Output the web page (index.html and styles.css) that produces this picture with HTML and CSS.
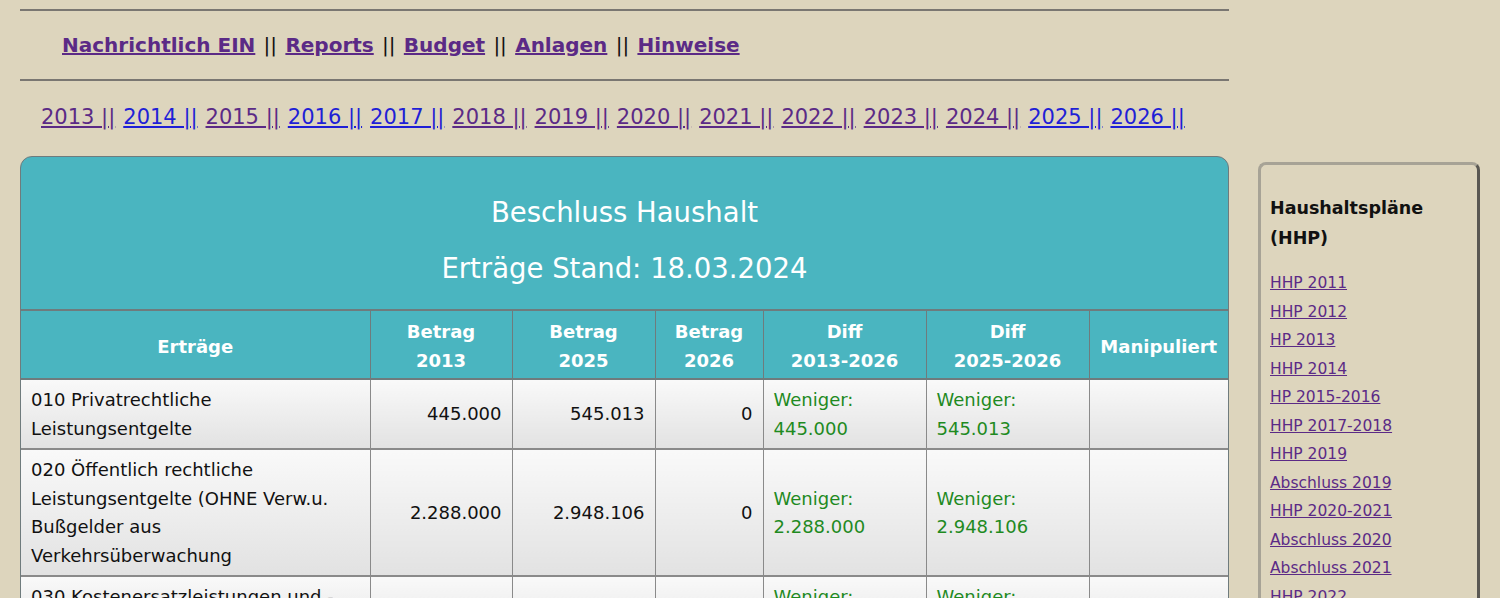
FILE: index.html
```html
<!DOCTYPE html>
<html lang="de">
<head>
<meta charset="utf-8">
<title>Beschluss Haushalt</title>
<link rel="stylesheet" href="styles.css">
</head>
<body>
<div class="page">
  <div class="main">
    <hr class="rule rule-top">
    <p class="nav">
      <a href="#" class="v">Nachrichtlich EIN</a><span class="sep">||</span><a href="#" class="v">Reports</a><span class="sep">||</span><a href="#" class="v">Budget</a><span class="sep">||</span><a href="#" class="v">Anlagen</a><span class="sep">||</span><a href="#" class="v">Hinweise</a>
    </p>
    <hr class="rule">
    <p class="years">
      <a href="#" class="v">2013 ||</a>
      <a href="#" class="b">2014 ||</a>
      <a href="#" class="v">2015 ||</a>
      <a href="#" class="b">2016 ||</a>
      <a href="#" class="b">2017 ||</a>
      <a href="#" class="v">2018 ||</a>
      <a href="#" class="v">2019 ||</a>
      <a href="#" class="v">2020 ||</a>
      <a href="#" class="v">2021 ||</a>
      <a href="#" class="v">2022 ||</a>
      <a href="#" class="v">2023 ||</a>
      <a href="#" class="v">2024 ||</a>
      <a href="#" class="b">2025 ||</a>
      <a href="#" class="b">2026 ||</a>
    </p>
    <div class="card">
      <div class="card-head">
        <div class="card-title">Beschluss Haushalt</div>
        <div class="card-title">Erträge Stand: 18.03.2024</div>
      </div>
      <table class="grid">
        <colgroup>
          <col class="c1"><col class="c2"><col class="c3"><col class="c4"><col class="c5"><col class="c6"><col class="c7">
        </colgroup>
        <thead>
          <tr>
            <th>Erträge</th>
            <th>Betrag<br>2013</th>
            <th>Betrag<br>2025</th>
            <th>Betrag<br>2026</th>
            <th>Diff<br>2013-2026</th>
            <th>Diff<br>2025-2026</th>
            <th>Manipuliert</th>
          </tr>
        </thead>
        <tbody>
          <tr>
            <td>010 Privatrechtliche Leistungsentgelte</td>
            <td class="num">445.000</td>
            <td class="num">545.013</td>
            <td class="num">0</td>
            <td class="diff">Weniger:<br>445.000</td>
            <td class="diff">Weniger:<br>545.013</td>
            <td></td>
          </tr>
          <tr>
            <td>020 Öffentlich rechtliche Leistungsentgelte (OHNE Verw.u. Bußgelder aus Verkehrsüberwachung</td>
            <td class="num">2.288.000</td>
            <td class="num">2.948.106</td>
            <td class="num">0</td>
            <td class="diff">Weniger:<br>2.288.000</td>
            <td class="diff">Weniger:<br>2.948.106</td>
            <td></td>
          </tr>
          <tr>
            <td>030 Kostenersatzleistungen und -erstattungen</td>
            <td class="num">1.120.000</td>
            <td class="num">1.310.500</td>
            <td class="num">0</td>
            <td class="diff">Weniger:<br>1.120.000</td>
            <td class="diff">Weniger:<br>1.310.500</td>
            <td></td>
          </tr>
        </tbody>
      </table>
    </div>
  </div>
  <aside class="side">
    <h3 class="side-title">Haushaltspläne (HHP)</h3>
    <ul class="side-list">
      <li><a href="#">HHP 2011</a></li>
      <li><a href="#">HHP 2012</a></li>
      <li><a href="#">HP 2013</a></li>
      <li><a href="#">HHP 2014</a></li>
      <li><a href="#">HP 2015-2016</a></li>
      <li><a href="#">HHP 2017-2018</a></li>
      <li><a href="#">HHP 2019</a></li>
      <li><a href="#">Abschluss 2019</a></li>
      <li><a href="#">HHP 2020-2021</a></li>
      <li><a href="#">Abschluss 2020</a></li>
      <li><a href="#">Abschluss 2021</a></li>
      <li><a href="#">HHP 2022</a></li>
      <li><a href="#">Abschluss 2022</a></li>
    </ul>
  </aside>
</div>
</body>
</html>
```

FILE: styles.css
```css
html, body {
  margin: 0;
  padding: 0;
  background: #ddd5bd;
  font-family: "DejaVu Sans", Verdana, sans-serif;
  color: #111;
  overflow: hidden;
}

.page {
  display: flex;
  align-items: flex-start;
  gap: 29px;
  padding: 0 20px;
}

.main {
  width: 1209px;
  flex: none;
}

.rule {
  border: 0;
  border-top: 2px solid #7a7772;
  margin: 0;
}

.rule-top {
  margin-top: 9px;
}

.nav {
  margin: 0;
  padding: 20px 0 20px 42px;
  font-size: 20px;
  font-weight: bold;
  line-height: 28px;
  color: #111;
}

.nav .sep {
  font-weight: normal;
  padding: 0 8.3px;
}

a.v {
  color: #5b2a86;
}

a.b {
  color: #1f1fd6;
}

.years {
  margin: 0;
  padding: 22px 0 0 21px;
  font-size: 21px;
  line-height: 28px;
}

.years a {
  margin-right: 1.3px;
}

.card {
  margin-top: 25px;
  background: #4ab5c0;
  border: 1px solid #6f7b7d;
  border-radius: 12px 12px 0 0;
  overflow: hidden;
}

.card-head {
  padding: 40px 0 26px;
  text-align: center;
  color: #fff;
}

.card-title {
  font-size: 27.5px;
  line-height: 30px;
}

.card-title:first-child {
  margin-bottom: 26px;
}

.grid {
  width: 100%;
  border-collapse: collapse;
  table-layout: fixed;
  font-size: 18px;
}

.c1 { width: 349px; }
.c2 { width: 142px; }
.c3 { width: 143px; }
.c4 { width: 108px; }
.c5 { width: 163px; }
.c6 { width: 163px; }
.c7 { width: auto; }

.grid th {
  color: #fff;
  font-weight: bold;
  line-height: 29px;
  padding: 6px 4px 3px;
  border-top: 2px solid #6f7b7d;
  border-left: 1px solid #6f7b7d;
  border-bottom: 2px solid #6f7b7d;
  text-align: center;
}

.grid th:first-child,
.grid td:first-child {
  border-left: 0;
}

.grid td {
  background: linear-gradient(#f9f9f9, #e2e2e2);
  line-height: 28.5px;
  padding: 6px 10px 5px 10px;
  border-left: 1px solid #8a8a8a;
  border-bottom: 2px solid #8a8a8a;
  vertical-align: middle;
  color: #111;
}

.grid td.num {
  text-align: right;
}

.grid td.diff {
  color: #1f8a1f;
}

.side {
  margin-top: 162px;
  width: 207px;
  flex: none;
  border: 3px solid #a7a396;
  border-right-color: #5a5853;
  border-bottom-color: #5a5853;
  border-radius: 8px;
  padding: 28px 0 0 9px;
  height: 500px;
}

.side-title {
  margin: 0 0 16px;
  font-size: 17.5px;
  line-height: 30px;
  font-weight: bold;
  color: #111;
}

.side-list {
  list-style: none;
  margin: 0;
  padding: 0;
  font-size: 15.5px;
  line-height: 28.5px;
}

.side-list a {
  color: #5b2a86;
}
```
